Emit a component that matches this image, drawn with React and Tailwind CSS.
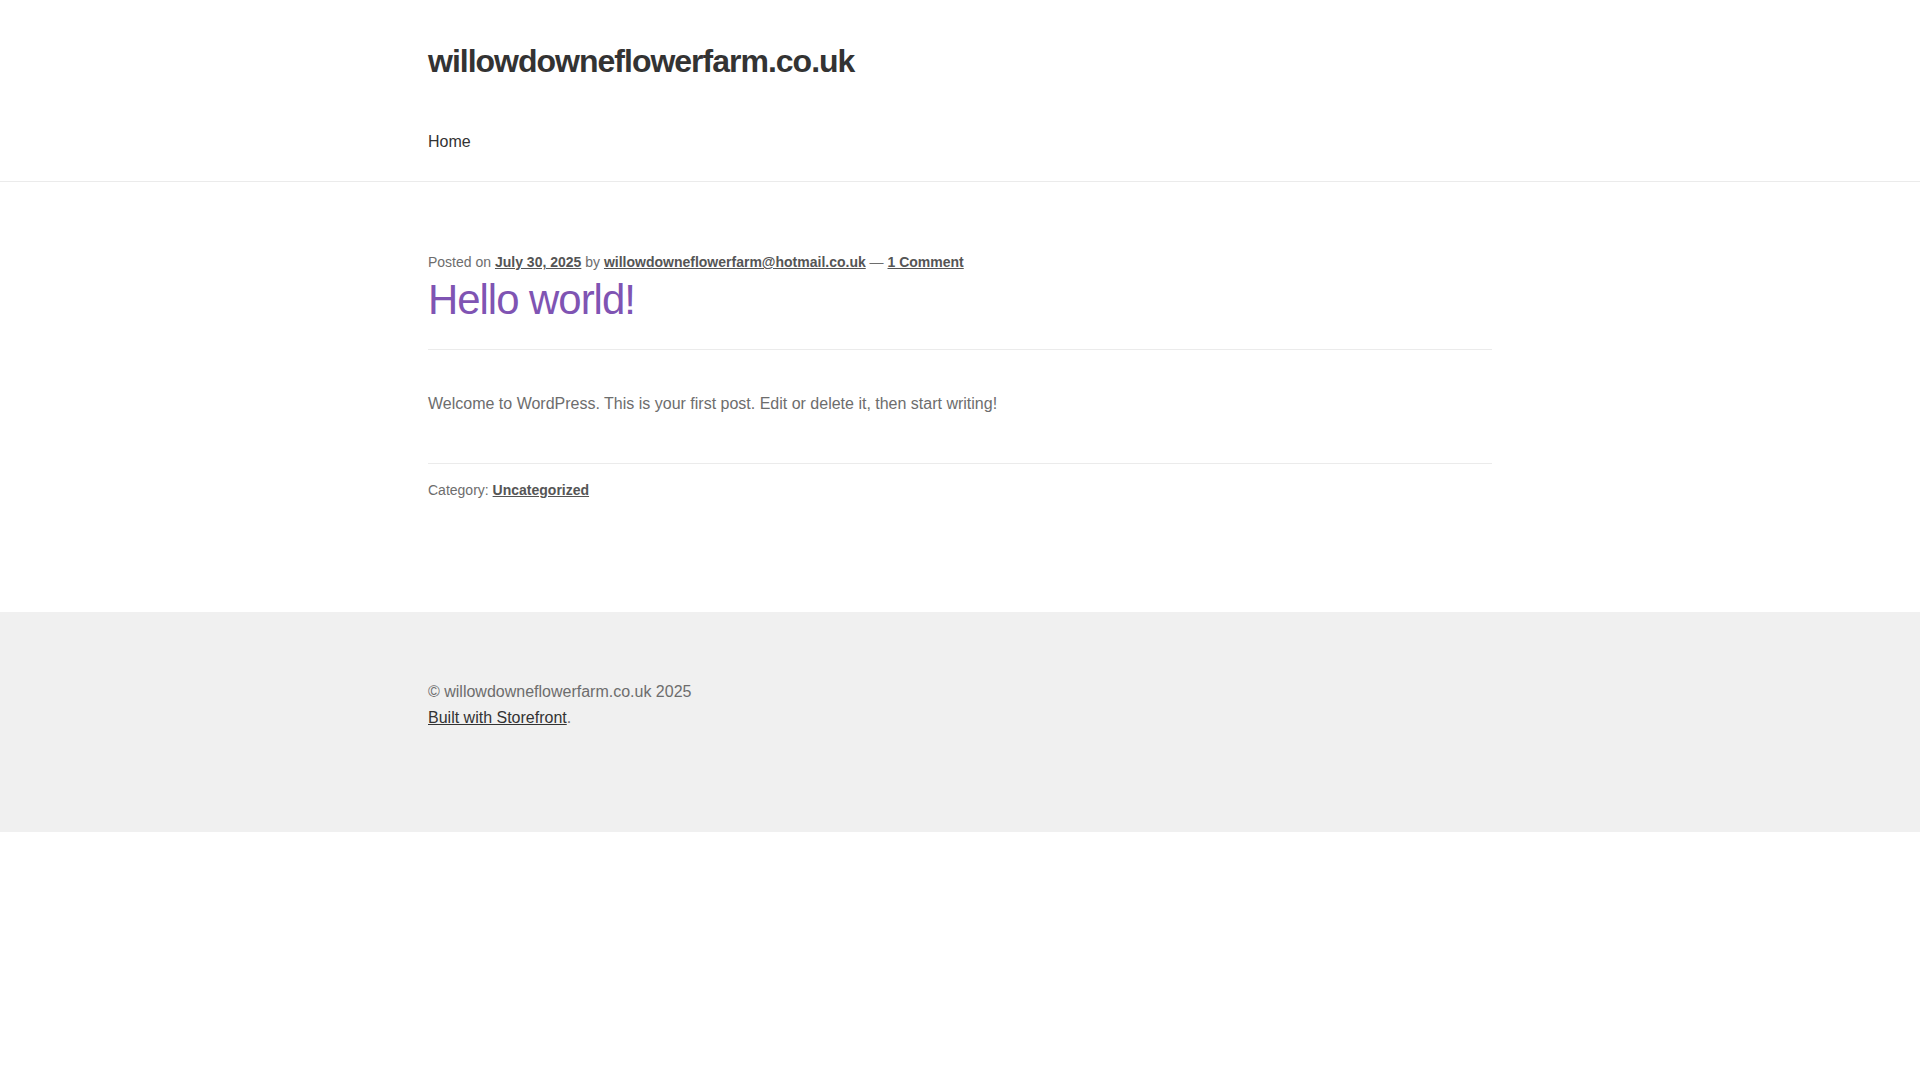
export default function App() {
  const font = { fontFamily: '"Liberation Sans", Arial, sans-serif' };
  return (
    <div className="min-h-screen bg-white text-[#6d6d6d]" style={font}>
      {/* Header */}
      <header className="border-b border-[#ebebeb] pt-[41px] pb-[27px]">
        <div className="w-[1064px] mx-auto">
          <h1 className="text-[32px] leading-[40px] font-bold tracking-[-1px] text-[#333333]">
            <a href="#">willowdowneflowerfarm.co.uk</a>
          </h1>
          <nav className="mt-[49px]">
            <a href="#" className="text-[16px] leading-[24px] text-[#333333]">Home</a>
          </nav>
        </div>
      </header>

      {/* Post */}
      <main className="w-[1064px] mx-auto pt-[70px] pb-[112px]">
        <article>
          <div className="text-[14px] leading-[20px]">
            Posted on{' '}
            <a href="#" className="font-bold underline text-[#555555]">July 30, 2025</a> by{' '}
            <a href="#" className="font-bold underline text-[#555555]">willowdowneflowerfarm@hotmail.co.uk</a> —{' '}
            <a href="#" className="font-bold underline text-[#555555]">1 Comment</a>
          </div>
          <h2 className="mt-[4px] text-[41.9px] leading-[48px] tracking-[-1px] text-[#7f54b3] pb-[25px] border-b border-[#ebebeb]">
            <a href="#">Hello world!</a>
          </h2>
          <p className="mt-[41px] text-[16px] leading-[26px]">
            Welcome to WordPress. This is your first post. Edit or delete it, then start writing!
          </p>
          <div className="mt-[46px] border-t border-[#ebebeb] pt-[16px] text-[14px] leading-[20px]">
            Category: <a href="#" className="font-bold underline text-[#555555]">Uncategorized</a>
          </div>
        </article>
      </main>

      {/* Footer */}
      <footer className="bg-[#f0f0f0] pt-[67px] pb-[101px]">
        <div className="w-[1064px] mx-auto text-[16px] leading-[26px]">
          <div>© willowdowneflowerfarm.co.uk 2025</div>
          <div>
            <a href="#" className="underline text-[#333333]">Built with Storefront</a>.
          </div>
        </div>
      </footer>
    </div>
  );
}
